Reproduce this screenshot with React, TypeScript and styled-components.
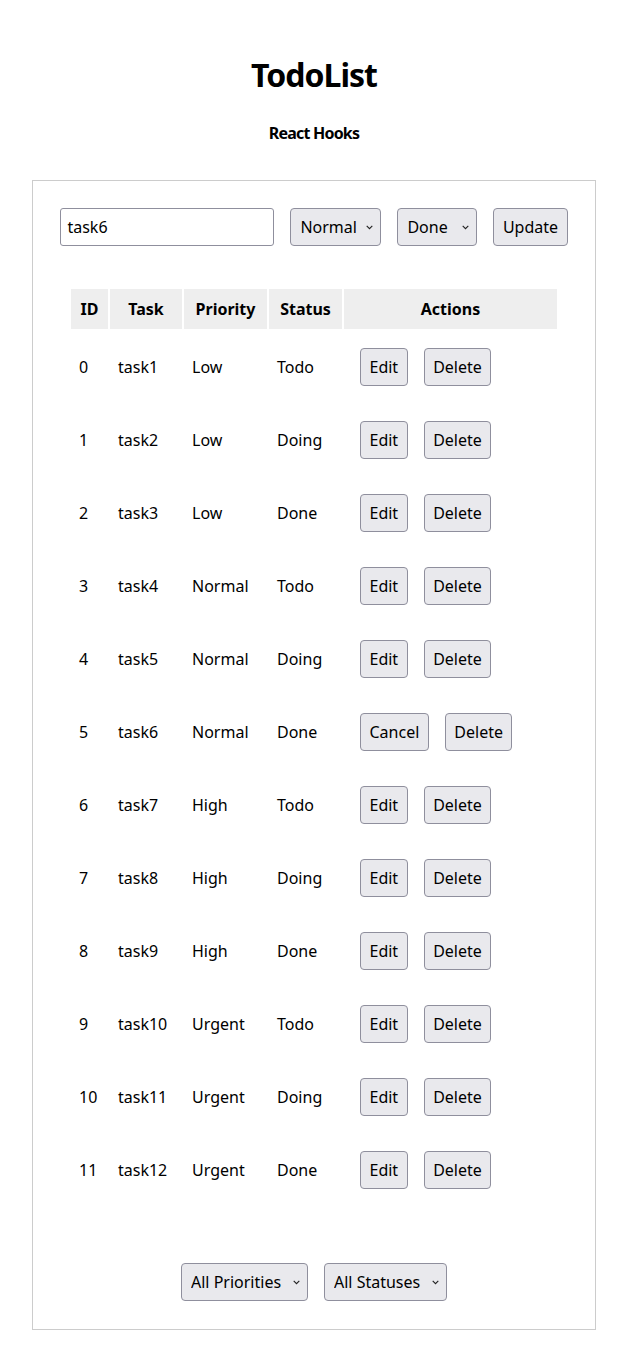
import React, { useState } from "react";
import styled, { createGlobalStyle } from "styled-components";

const GlobalStyle = createGlobalStyle`
  *, *::before, *::after { box-sizing: border-box; }
  html, body { margin: 0; padding: 0; background: #ffffff; }
  body {
    font-family: "Noto Sans", "Open Sans", sans-serif;
    font-size: 16px;
    color: #000000;
  }
`;

const Page = styled.div`
  display: flex;
  flex-direction: column;
  align-items: center;
  padding: 55px 32px 32px;
`;

const Title = styled.h1`
  margin: 0;
  font-size: 32px;
  line-height: 40px;
  font-weight: 700;
  letter-spacing: -1px;
`;

const Subtitle = styled.h4`
  margin: 28px 0 37px;
  font-size: 16px;
  line-height: 20px;
  font-weight: 700;
  letter-spacing: -0.8px;
`;

const Panel = styled.div`
  width: 100%;
  border: 1px solid #cccccc;
  padding: 27px 28px 28px;
  display: flex;
  flex-direction: column;
  align-items: center;
`;

const FormRow = styled.div`
  display: flex;
  gap: 16px;
  justify-content: center;
`;

const TextInput = styled.input`
  width: 214px;
  height: 38px;
  border: 1px solid #8f8f9d;
  border-radius: 3px;
  padding: 0 6px;
  font-family: inherit;
  font-size: 16px;
  color: #000;
  background: #fff;
  outline: none;
`;

const SelectWrap = styled.div<{ $w: number }>`
  position: relative;
  width: ${(p) => p.$w}px;
  height: 38px;
`;

const NativeSelect = styled.select`
  appearance: none;
  -webkit-appearance: none;
  width: 100%;
  height: 100%;
  border: 1px solid #8f8f9d;
  border-radius: 4px;
  background: #e9e9ed;
  padding: 0 22px 0 9px;
  font-family: inherit;
  font-size: 16px;
  color: #000;
  outline: none;
`;

const Chevron = styled.svg`
  position: absolute;
  right: 8px;
  top: 17px;
  width: 7px;
  height: 5px;
  pointer-events: none;
`;

const Button = styled.button`
  height: 38px;
  padding: 0 8.5px;
  border: 1px solid #8f8f9d;
  border-radius: 4px;
  background: #e9e9ed;
  font-family: inherit;
  font-size: 16px;
  color: #000;
  cursor: pointer;
`;

const Table = styled.table`
  margin-top: 41px;
  width: 490px;
  table-layout: fixed;
  border-collapse: separate;
  border-spacing: 2px;
`;

const Th = styled.th<{ $w: number }>`
  width: ${(p) => p.$w}px;
  height: 40px;
  padding: 0;
  background: #eeeeee;
  font-weight: 700;
  font-size: 16px;
  text-align: center;
`;

const Row = styled.tr`
  height: 71px;
`;

const Td = styled.td`
  padding: 0 0 0 8px;
  text-align: left;
  vertical-align: middle;
  white-space: nowrap;
`;

const ActionsCell = styled.div`
  display: flex;
  gap: 16px;
  padding-left: 8px;
`;

const FilterRow = styled.div`
  margin-top: 56px;
  display: flex;
  gap: 16px;
  justify-content: center;
`;

const Select: React.FC<{ w: number; value: string; options: string[] }> = ({ w, value, options }) => (
  <SelectWrap $w={w}>
    <NativeSelect defaultValue={value}>
      {options.map((o) => (
        <option key={o} value={o}>
          {o}
        </option>
      ))}
    </NativeSelect>
    <Chevron viewBox="0 0 7 5">
      <path d="M0.7 0.9 L3.5 3.7 L6.3 0.9" fill="none" stroke="#222" strokeWidth="1.1" />
    </Chevron>
  </SelectWrap>
);

const priorities = ["Low", "Normal", "High", "Urgent"];
const statuses = ["Todo", "Doing", "Done"];

const todos = Array.from({ length: 12 }, (_, i) => ({
  id: i,
  task: `task${i + 1}`,
  priority: priorities[Math.floor(i / 3)],
  status: statuses[i % 3],
}));

export default function App() {
  const [editing] = useState(5);
  return (
    <>
      <GlobalStyle />
      <Page>
        <Title>TodoList</Title>
        <Subtitle>React Hooks</Subtitle>
        <Panel>
          <FormRow>
            <TextInput defaultValue="task6" />
            <Select w={91} value="Normal" options={priorities} />
            <Select w={80} value="Done" options={statuses} />
            <Button>Update</Button>
          </FormRow>
          <Table>
            <thead>
              <tr>
                <Th $w={37}>ID</Th>
                <Th $w={72}>Task</Th>
                <Th $w={83}>Priority</Th>
                <Th $w={73}>Status</Th>
                <Th $w={213}>Actions</Th>
              </tr>
            </thead>
            <tbody>
              {todos.map((t) => (
                <Row key={t.id}>
                  <Td>{t.id}</Td>
                  <Td>{t.task}</Td>
                  <Td>{t.priority}</Td>
                  <Td>{t.status}</Td>
                  <Td>
                    <ActionsCell>
                      <Button>{t.id === editing ? "Cancel" : "Edit"}</Button>
                      <Button>Delete</Button>
                    </ActionsCell>
                  </Td>
                </Row>
              ))}
            </tbody>
          </Table>
          <FilterRow>
            <Select w={127} value="All Priorities" options={["All Priorities", ...priorities]} />
            <Select w={123} value="All Statuses" options={["All Statuses", ...statuses]} />
          </FilterRow>
        </Panel>
      </Page>
    </>
  );
}
